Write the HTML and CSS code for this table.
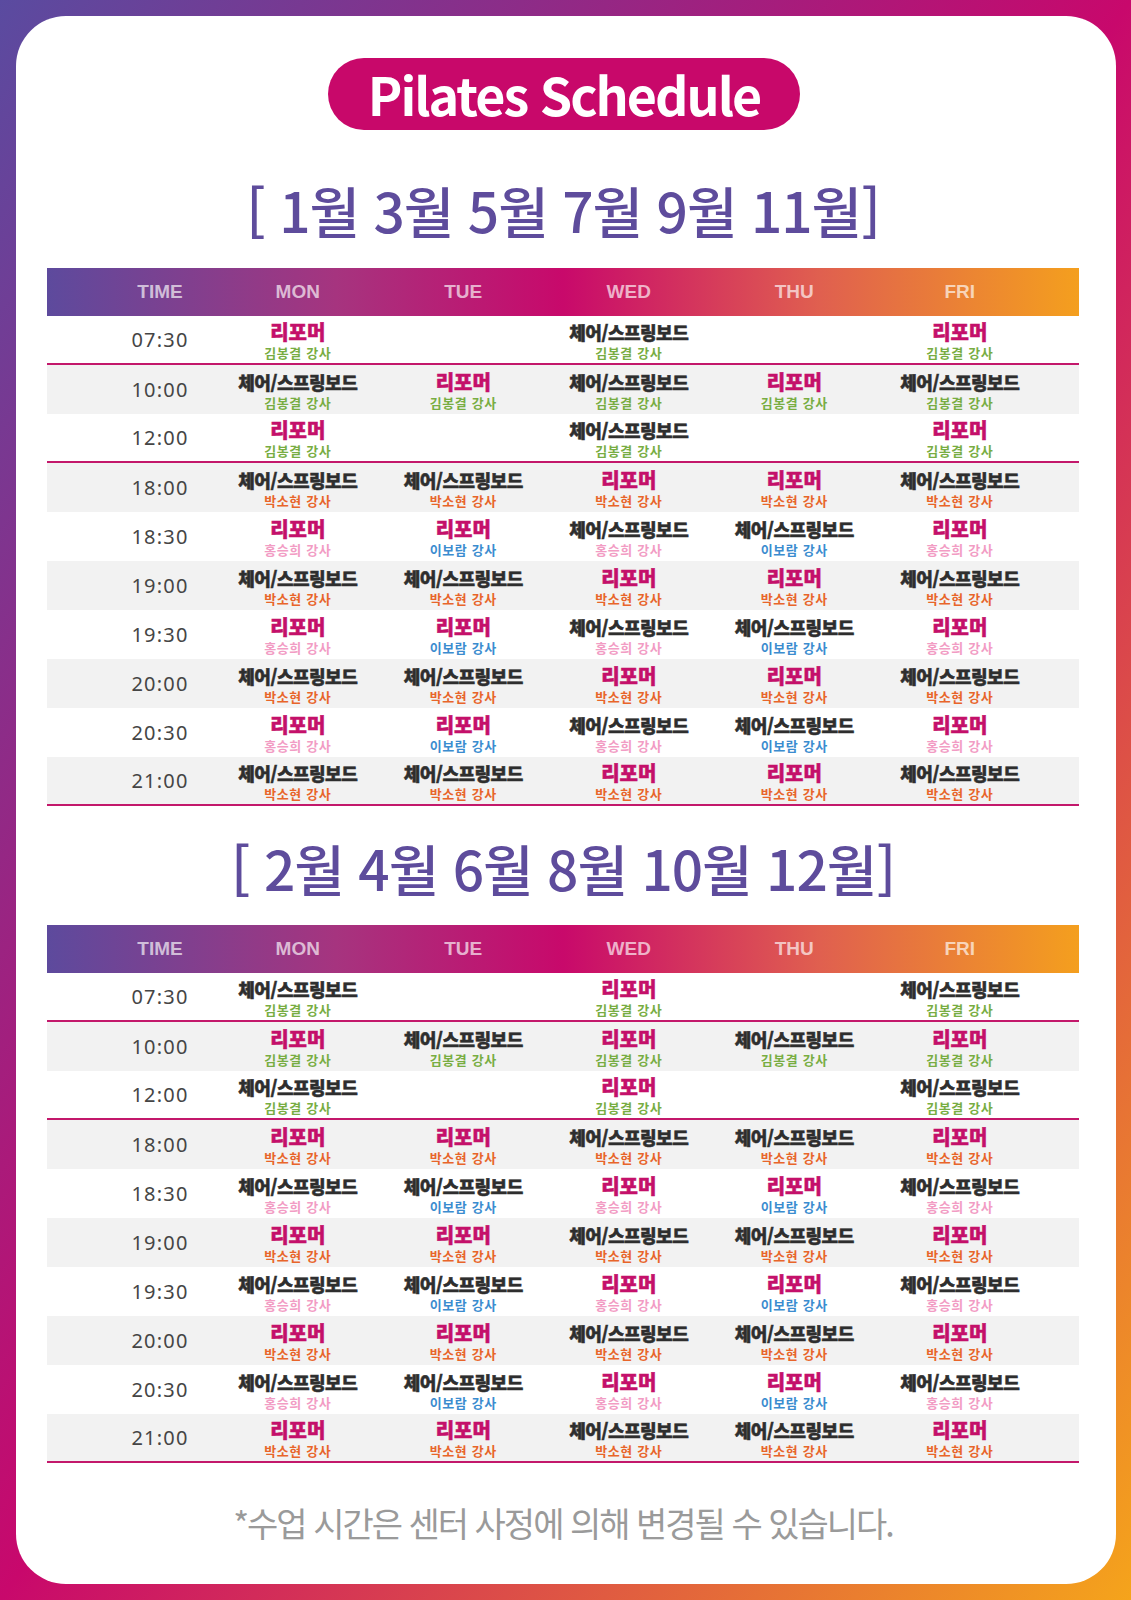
FILE: index.html
```html
<!DOCTYPE html>
<html lang="ko">
<head>
<meta charset="utf-8">
<title>Pilates Schedule</title>
<link rel="stylesheet" href="styles.css">
</head>
<body>
<div class="page">
  <div class="card">
    <div class="pill">Pilates Schedule</div>

    <h2 class="months">[ 1월 3월 5월 7월 9월 11월]</h2>
    <div class="table">
      <div class="row head"><div>TIME</div><div>MON</div><div>TUE</div><div>WED</div><div>THU</div><div>FRI</div></div>

      <div class="row sep"><div class="time">07:30</div>
        <div class="cell"><b class="ref">리포머</b><i class="g">김봉결 강사</i></div>
        <div class="cell"></div>
        <div class="cell"><b class="ch">체어/스프링보드</b><i class="g">김봉결 강사</i></div>
        <div class="cell"></div>
        <div class="cell"><b class="ref">리포머</b><i class="g">김봉결 강사</i></div>
      </div>
      <div class="row alt"><div class="time">10:00</div>
        <div class="cell"><b class="ch">체어/스프링보드</b><i class="g">김봉결 강사</i></div>
        <div class="cell"><b class="ref">리포머</b><i class="g">김봉결 강사</i></div>
        <div class="cell"><b class="ch">체어/스프링보드</b><i class="g">김봉결 강사</i></div>
        <div class="cell"><b class="ref">리포머</b><i class="g">김봉결 강사</i></div>
        <div class="cell"><b class="ch">체어/스프링보드</b><i class="g">김봉결 강사</i></div>
      </div>
      <div class="row sep"><div class="time">12:00</div>
        <div class="cell"><b class="ref">리포머</b><i class="g">김봉결 강사</i></div>
        <div class="cell"></div>
        <div class="cell"><b class="ch">체어/스프링보드</b><i class="g">김봉결 강사</i></div>
        <div class="cell"></div>
        <div class="cell"><b class="ref">리포머</b><i class="g">김봉결 강사</i></div>
      </div>
      <div class="row alt"><div class="time">18:00</div>
        <div class="cell"><b class="ch">체어/스프링보드</b><i class="o">박소현 강사</i></div>
        <div class="cell"><b class="ch">체어/스프링보드</b><i class="o">박소현 강사</i></div>
        <div class="cell"><b class="ref">리포머</b><i class="o">박소현 강사</i></div>
        <div class="cell"><b class="ref">리포머</b><i class="o">박소현 강사</i></div>
        <div class="cell"><b class="ch">체어/스프링보드</b><i class="o">박소현 강사</i></div>
      </div>
      <div class="row"><div class="time">18:30</div>
        <div class="cell"><b class="ref">리포머</b><i class="p">홍승희 강사</i></div>
        <div class="cell"><b class="ref">리포머</b><i class="b">이보람 강사</i></div>
        <div class="cell"><b class="ch">체어/스프링보드</b><i class="p">홍승희 강사</i></div>
        <div class="cell"><b class="ch">체어/스프링보드</b><i class="b">이보람 강사</i></div>
        <div class="cell"><b class="ref">리포머</b><i class="p">홍승희 강사</i></div>
      </div>
      <div class="row alt"><div class="time">19:00</div>
        <div class="cell"><b class="ch">체어/스프링보드</b><i class="o">박소현 강사</i></div>
        <div class="cell"><b class="ch">체어/스프링보드</b><i class="o">박소현 강사</i></div>
        <div class="cell"><b class="ref">리포머</b><i class="o">박소현 강사</i></div>
        <div class="cell"><b class="ref">리포머</b><i class="o">박소현 강사</i></div>
        <div class="cell"><b class="ch">체어/스프링보드</b><i class="o">박소현 강사</i></div>
      </div>
      <div class="row"><div class="time">19:30</div>
        <div class="cell"><b class="ref">리포머</b><i class="p">홍승희 강사</i></div>
        <div class="cell"><b class="ref">리포머</b><i class="b">이보람 강사</i></div>
        <div class="cell"><b class="ch">체어/스프링보드</b><i class="p">홍승희 강사</i></div>
        <div class="cell"><b class="ch">체어/스프링보드</b><i class="b">이보람 강사</i></div>
        <div class="cell"><b class="ref">리포머</b><i class="p">홍승희 강사</i></div>
      </div>
      <div class="row alt"><div class="time">20:00</div>
        <div class="cell"><b class="ch">체어/스프링보드</b><i class="o">박소현 강사</i></div>
        <div class="cell"><b class="ch">체어/스프링보드</b><i class="o">박소현 강사</i></div>
        <div class="cell"><b class="ref">리포머</b><i class="o">박소현 강사</i></div>
        <div class="cell"><b class="ref">리포머</b><i class="o">박소현 강사</i></div>
        <div class="cell"><b class="ch">체어/스프링보드</b><i class="o">박소현 강사</i></div>
      </div>
      <div class="row"><div class="time">20:30</div>
        <div class="cell"><b class="ref">리포머</b><i class="p">홍승희 강사</i></div>
        <div class="cell"><b class="ref">리포머</b><i class="b">이보람 강사</i></div>
        <div class="cell"><b class="ch">체어/스프링보드</b><i class="p">홍승희 강사</i></div>
        <div class="cell"><b class="ch">체어/스프링보드</b><i class="b">이보람 강사</i></div>
        <div class="cell"><b class="ref">리포머</b><i class="p">홍승희 강사</i></div>
      </div>
      <div class="row alt sep"><div class="time">21:00</div>
        <div class="cell"><b class="ch">체어/스프링보드</b><i class="o">박소현 강사</i></div>
        <div class="cell"><b class="ch">체어/스프링보드</b><i class="o">박소현 강사</i></div>
        <div class="cell"><b class="ref">리포머</b><i class="o">박소현 강사</i></div>
        <div class="cell"><b class="ref">리포머</b><i class="o">박소현 강사</i></div>
        <div class="cell"><b class="ch">체어/스프링보드</b><i class="o">박소현 강사</i></div>
      </div>
    </div>

    <h2 class="months second">[ 2월 4월 6월 8월 10월 12월]</h2>
    <div class="table">
      <div class="row head"><div>TIME</div><div>MON</div><div>TUE</div><div>WED</div><div>THU</div><div>FRI</div></div>

      <div class="row sep"><div class="time">07:30</div>
        <div class="cell"><b class="ch">체어/스프링보드</b><i class="g">김봉결 강사</i></div>
        <div class="cell"></div>
        <div class="cell"><b class="ref">리포머</b><i class="g">김봉결 강사</i></div>
        <div class="cell"></div>
        <div class="cell"><b class="ch">체어/스프링보드</b><i class="g">김봉결 강사</i></div>
      </div>
      <div class="row alt"><div class="time">10:00</div>
        <div class="cell"><b class="ref">리포머</b><i class="g">김봉결 강사</i></div>
        <div class="cell"><b class="ch">체어/스프링보드</b><i class="g">김봉결 강사</i></div>
        <div class="cell"><b class="ref">리포머</b><i class="g">김봉결 강사</i></div>
        <div class="cell"><b class="ch">체어/스프링보드</b><i class="g">김봉결 강사</i></div>
        <div class="cell"><b class="ref">리포머</b><i class="g">김봉결 강사</i></div>
      </div>
      <div class="row sep"><div class="time">12:00</div>
        <div class="cell"><b class="ch">체어/스프링보드</b><i class="g">김봉결 강사</i></div>
        <div class="cell"></div>
        <div class="cell"><b class="ref">리포머</b><i class="g">김봉결 강사</i></div>
        <div class="cell"></div>
        <div class="cell"><b class="ch">체어/스프링보드</b><i class="g">김봉결 강사</i></div>
      </div>
      <div class="row alt"><div class="time">18:00</div>
        <div class="cell"><b class="ref">리포머</b><i class="o">박소현 강사</i></div>
        <div class="cell"><b class="ref">리포머</b><i class="o">박소현 강사</i></div>
        <div class="cell"><b class="ch">체어/스프링보드</b><i class="o">박소현 강사</i></div>
        <div class="cell"><b class="ch">체어/스프링보드</b><i class="o">박소현 강사</i></div>
        <div class="cell"><b class="ref">리포머</b><i class="o">박소현 강사</i></div>
      </div>
      <div class="row"><div class="time">18:30</div>
        <div class="cell"><b class="ch">체어/스프링보드</b><i class="p">홍승희 강사</i></div>
        <div class="cell"><b class="ch">체어/스프링보드</b><i class="b">이보람 강사</i></div>
        <div class="cell"><b class="ref">리포머</b><i class="p">홍승희 강사</i></div>
        <div class="cell"><b class="ref">리포머</b><i class="b">이보람 강사</i></div>
        <div class="cell"><b class="ch">체어/스프링보드</b><i class="p">홍승희 강사</i></div>
      </div>
      <div class="row alt"><div class="time">19:00</div>
        <div class="cell"><b class="ref">리포머</b><i class="o">박소현 강사</i></div>
        <div class="cell"><b class="ref">리포머</b><i class="o">박소현 강사</i></div>
        <div class="cell"><b class="ch">체어/스프링보드</b><i class="o">박소현 강사</i></div>
        <div class="cell"><b class="ch">체어/스프링보드</b><i class="o">박소현 강사</i></div>
        <div class="cell"><b class="ref">리포머</b><i class="o">박소현 강사</i></div>
      </div>
      <div class="row"><div class="time">19:30</div>
        <div class="cell"><b class="ch">체어/스프링보드</b><i class="p">홍승희 강사</i></div>
        <div class="cell"><b class="ch">체어/스프링보드</b><i class="b">이보람 강사</i></div>
        <div class="cell"><b class="ref">리포머</b><i class="p">홍승희 강사</i></div>
        <div class="cell"><b class="ref">리포머</b><i class="b">이보람 강사</i></div>
        <div class="cell"><b class="ch">체어/스프링보드</b><i class="p">홍승희 강사</i></div>
      </div>
      <div class="row alt"><div class="time">20:00</div>
        <div class="cell"><b class="ref">리포머</b><i class="o">박소현 강사</i></div>
        <div class="cell"><b class="ref">리포머</b><i class="o">박소현 강사</i></div>
        <div class="cell"><b class="ch">체어/스프링보드</b><i class="o">박소현 강사</i></div>
        <div class="cell"><b class="ch">체어/스프링보드</b><i class="o">박소현 강사</i></div>
        <div class="cell"><b class="ref">리포머</b><i class="o">박소현 강사</i></div>
      </div>
      <div class="row"><div class="time">20:30</div>
        <div class="cell"><b class="ch">체어/스프링보드</b><i class="p">홍승희 강사</i></div>
        <div class="cell"><b class="ch">체어/스프링보드</b><i class="b">이보람 강사</i></div>
        <div class="cell"><b class="ref">리포머</b><i class="p">홍승희 강사</i></div>
        <div class="cell"><b class="ref">리포머</b><i class="b">이보람 강사</i></div>
        <div class="cell"><b class="ch">체어/스프링보드</b><i class="p">홍승희 강사</i></div>
      </div>
      <div class="row alt sep"><div class="time">21:00</div>
        <div class="cell"><b class="ref">리포머</b><i class="o">박소현 강사</i></div>
        <div class="cell"><b class="ref">리포머</b><i class="o">박소현 강사</i></div>
        <div class="cell"><b class="ch">체어/스프링보드</b><i class="o">박소현 강사</i></div>
        <div class="cell"><b class="ch">체어/스프링보드</b><i class="o">박소현 강사</i></div>
        <div class="cell"><b class="ref">리포머</b><i class="o">박소현 강사</i></div>
      </div>
    </div>

    <p class="note">*수업 시간은 센터 사정에 의해 변경될 수 있습니다.</p>
  </div>
</div>
</body>
</html>
```

FILE: styles.css
```css
* { box-sizing: border-box; }
html, body { margin: 0; padding: 0; }
body {
  width: 1131px;
  height: 1600px;
  font-family: "Noto Sans CJK KR", "Noto Sans", sans-serif;
}
.page {
  width: 1131px;
  height: 1600px;
  padding: 16px 15px 16px 16px;
  background: linear-gradient(to bottom right, #5a4ba0 0%, #c8086c 50%, #f5a41b 100%);
}
.card {
  width: 1100px;
  height: 1568px;
  background: #fff;
  border-radius: 50px;
  padding: 42px 37px 0 31px;
  display: flex;
  flex-direction: column;
  align-items: stretch;
}
.pill {
  align-self: center;
  margin-left: 2px;
  width: 472px;
  height: 72px;
  border-radius: 36px;
  background: #c8086a;
  color: #fff;
  font-family: "Noto Sans CJK KR", sans-serif;
  font-weight: 700;
  font-size: 52px;
  letter-spacing: -2px;
  line-height: 72px;
  text-align: center;
}
.months {
  margin: 49px 0 0 0;
  height: 60px;
  line-height: 60px;
  text-align: center;
  font-family: "Noto Sans CJK KR", sans-serif;
  font-weight: 500;
  font-size: 55px;
  letter-spacing: -1px;
  color: #5e4c9c;
}
.months.second { margin-top: 31px; }
.table { margin-top: 29px; }
.months.second + .table { margin-top: 28px; }
.row {
  display: grid;
  grid-template-columns: 168px repeat(5, 165.5px) 1fr;
  height: 49px;
  align-items: center;
  background: #fff;
}
.row.alt { background: #f2f2f2; }
.row.sep { border-bottom: 2px solid #c3186b; }
.row.head {
  height: 48px;
  background: linear-gradient(to right, #5d4a9d 0%, #a6347f 28%, #c8096b 50%, #e0604f 75%, #f49f1e 100%);
  font-family: "Liberation Sans", Arial, sans-serif;
  font-weight: 700;
  font-size: 19px;
  color: rgba(255, 255, 255, 0.66);
  text-align: center;
}
.row.head > div:first-child { padding-left: 58px; }
.time {
  padding-left: 58px;
  text-align: center;
  font-family: "Noto Sans", sans-serif;
  font-size: 20px;
  letter-spacing: 1.2px;
  color: #454545;
}
.cell {
  display: flex;
  flex-direction: column;
  align-items: center;
  justify-content: center;
  height: 100%;
  padding-top: 1px;
}
.cell b {
  display: block;
  font-family: "Noto Sans CJK KR", sans-serif;
  font-weight: 900;
  font-size: 18px;
  line-height: 24px;
  letter-spacing: -0.5px;
  -webkit-text-stroke: 0.5px currentColor;
}
.cell b.ref {
  font-size: 20px;
  letter-spacing: 0;
}
.cell i {
  display: block;
  font-style: normal;
  font-family: "Noto Sans CJK KR", sans-serif;
  font-weight: 700;
  font-size: 13px;
  line-height: 17px;
  letter-spacing: 0.6px;
}
.ref { color: #c4106a; }
.ch { color: #2e2e2e; }
.g { color: #78ad42; }
.o { color: #e8652a; }
.p { color: #f29cc4; }
.b { color: #3b8ccf; }
.note {
  margin: 38px 0 0 0;
  height: 44px;
  line-height: 44px;
  text-align: center;
  font-family: "Noto Sans CJK KR", sans-serif;
  font-size: 34px;
  letter-spacing: -2px;
  color: #9a9a9a;
}
```
